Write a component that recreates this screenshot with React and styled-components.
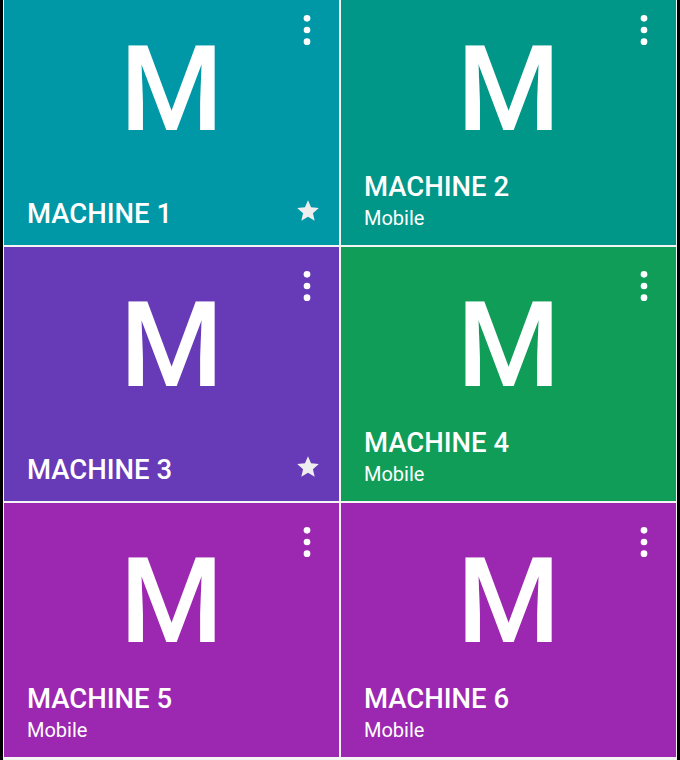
import React from "react";
import styled, { createGlobalStyle } from "styled-components";

const GlobalStyle = createGlobalStyle`
  html, body { margin: 0; padding: 0; background: #000; }
  body { font-family: Roboto, "Noto Sans", "Liberation Sans", sans-serif; }
`;

const Viewport = styled.div`
  width: 680px;
  height: 760px;
  overflow: hidden;
  background: #000;
  padding: 0 3px;
  box-sizing: border-box;
`;

const Grid = styled.div`
  margin-top: -9px;
  display: grid;
  grid-template-columns: 335px 335px;
  grid-auto-rows: 254px;
  gap: 2px;
  padding: 0 1px 6px;
  background: #f4f4f4;
`;

const Tile = styled.div`
  position: relative;
  display: flex;
  flex-direction: column;
  background: ${(p) => p.$color};
  color: #fff;
  padding: 40px 0 15px;
  box-sizing: border-box;
  overflow: hidden;
`;

const Letter = styled.div`
  font-size: 118px;
  line-height: 1;
  font-weight: 500;
  text-align: center;
`;

const MenuButton = styled.button`
  position: absolute;
  top: 19px;
  right: 12px;
  width: 40px;
  height: 40px;
  padding: 0;
  border: 0;
  background: none;
  color: #fff;
  display: flex;
  cursor: pointer;
  svg { width: 40px; height: 40px; }
`;

const Footer = styled.div`
  margin-top: auto;
  display: flex;
  justify-content: space-between;
  align-items: flex-start;
  padding: 0 18px 0 23px;
`;

const Labels = styled.div`
  display: flex;
  flex-direction: column;
`;

const Title = styled.div`
  font-size: 27.5px;
  line-height: 32px;
  font-weight: 500;
`;

const Subtitle = styled.div`
  font-size: 20px;
  line-height: 24px;
  font-weight: 400;
  margin-top: 3px;
`;

const Star = styled.svg`
  width: 26px;
  height: 26px;
  fill: #eeeeee;
  flex: none;
`;

const MoreVert = () => (
  <svg viewBox="0 0 24 24" fill="currentColor">
    <circle cx="12" cy="5" r="2" />
    <circle cx="12" cy="12" r="2" />
    <circle cx="12" cy="19" r="2" />
  </svg>
);

const machines = [
  { name: "MACHINE 1", color: "#0097a7", fav: true },
  { name: "MACHINE 2", color: "#009688", sub: "Mobile" },
  { name: "MACHINE 3", color: "#673ab7", fav: true },
  { name: "MACHINE 4", color: "#0f9d58", sub: "Mobile" },
  { name: "MACHINE 5", color: "#9c27b0", sub: "Mobile" },
  { name: "MACHINE 6", color: "#9c27b0", sub: "Mobile" },
];

export default function App() {
  return (
    <>
      <GlobalStyle />
      <Viewport>
        <Grid>
          {machines.map((m) => (
            <Tile key={m.name} $color={m.color}>
              <MenuButton aria-label="More options">
                <MoreVert />
              </MenuButton>
              <Letter>M</Letter>
              <Footer>
                <Labels>
                  <Title>{m.name}</Title>
                  {m.sub && <Subtitle>{m.sub}</Subtitle>}
                </Labels>
                {m.fav && (
                  <Star viewBox="0 0 24 24">
                    <path d="M12 17.27L18.18 21l-1.64-7.03L22 9.24l-7.19-.61L12 2 9.19 8.63 2 9.24l5.46 4.73L5.82 21z" />
                  </Star>
                )}
              </Footer>
            </Tile>
          ))}
        </Grid>
      </Viewport>
    </>
  );
}
